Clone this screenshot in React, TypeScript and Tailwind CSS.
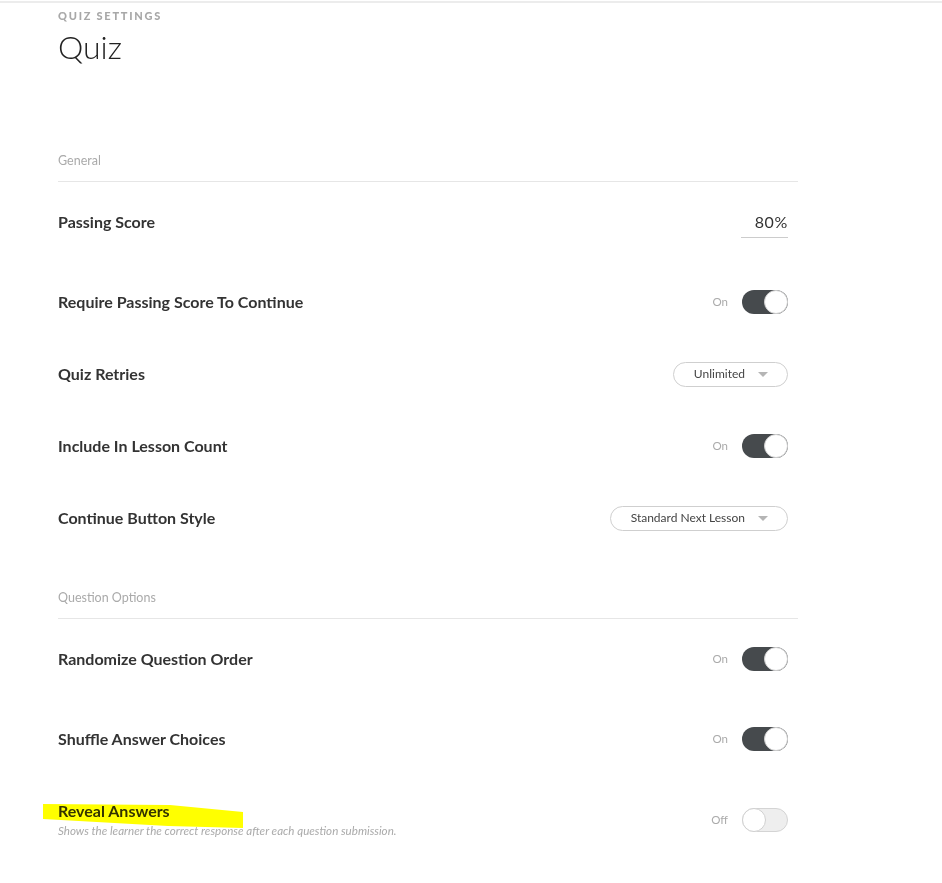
import React from 'react';

const font = { fontFamily: 'Lato, "Open Sans", Arial, sans-serif' };

function Toggle({ on }: { on: boolean }) {
  return (
    <div className="flex items-center gap-[14px]">
      <span className="text-[11.5px] text-[#aaa]">{on ? 'On' : 'Off'}</span>
      {on ? (
        <div className="w-[46px] h-[24px] rounded-full bg-[#464a4d] flex items-center justify-end">
          <div className="w-[24px] h-[24px] rounded-full bg-white border border-[#d0d0d0]" />
        </div>
      ) : (
        <div className="w-[46px] h-[24px] rounded-full bg-[#eeeeee] border border-[#d4d4d4] flex items-center">
          <div className="w-[24px] h-[24px] -ml-px rounded-full bg-white border border-[#d0d0d0]" />
        </div>
      )}
    </div>
  );
}

function Select({ value }: { value: string }) {
  return (
    <div className="h-[25px] rounded-full border border-[#cfcfcf] flex items-center pl-[20px] pr-[19px] gap-[13px] text-[12px] text-[#444]">
      <span>{value}</span>
      <svg width="10" height="5" viewBox="0 0 10 5">
        <polygon points="0,0 10,0 5,5" fill="#b5b5b5" />
      </svg>
    </div>
  );
}

function Row({
  label,
  desc,
  h = 'h-[72px]',
  children,
}: {
  label: string;
  desc?: string;
  h?: string;
  children: React.ReactNode;
}) {
  return (
    <div className={`${h} flex items-center justify-between pr-[10px]`}>
      <div className="flex flex-col">
        <span className="text-[16px] font-bold text-[#333] leading-5">{label}</span>
        {desc && <span className="text-[11.6px] italic text-[#aaa] leading-4 mt-[2px]">{desc}</span>}
      </div>
      {children}
    </div>
  );
}

function SectionHeader({ title }: { title: string }) {
  return (
    <div className="text-[12.5px] leading-4 pb-3 border-b border-[#e6e6e6] text-[#aaa]">{title}</div>
  );
}

export default function App() {
  return (
    <div className="relative min-h-[883px] bg-white" style={font}>
      <div className="pt-px">
        <div className="h-[2px] bg-[#ececec]" />
      </div>
      <div className="pl-[58px] w-[798px]">
        <div className="mt-[5px] text-[11px] leading-4 font-black tracking-[0.16em] text-[#a8a8a8] uppercase">
          Quiz Settings
        </div>
        <h1 className="mt-[3px] text-[32px] leading-[40px] font-light text-[#222]">Quiz</h1>

        <div className="mt-[86px]">
          <SectionHeader title="General" />
          <Row label="Passing Score" h="h-[80px]">
            <div className="w-[47px] border-b border-[#cccccc] text-right text-[16px] text-[#333] leading-5 pb-[5px] mt-[5px] tracking-[0.04em]">
              80%
            </div>
          </Row>
          <div className="h-[4px]" />
          <Row label="Require Passing Score To Continue">
            <Toggle on />
          </Row>
          <Row label="Quiz Retries">
            <Select value="Unlimited" />
          </Row>
          <Row label="Include In Lesson Count">
            <Toggle on />
          </Row>
          <Row label="Continue Button Style">
            <Select value="Standard Next Lesson" />
          </Row>
        </div>

        <div className="mt-[36px]">
          <SectionHeader title="Question Options" />
          <Row label="Randomize Question Order" h="h-[80px]">
            <Toggle on />
          </Row>
          <div className="h-[4px]" />
          <Row label="Shuffle Answer Choices">
            <Toggle on />
          </Row>
          <Row
            label="Reveal Answers"
            desc="Shows the learner the correct response after each question submission."
            h="h-[90px]"
          >
            <Toggle on={false} />
          </Row>
        </div>
      </div>

      <svg
        className="absolute left-0 top-0 pointer-events-none mix-blend-multiply"
        width="942"
        height="883"
      >
        <polygon points="43,804 170,805 243,812 243,828 168,826 43,819" fill="#ffff00" />
      </svg>
    </div>
  );
}
